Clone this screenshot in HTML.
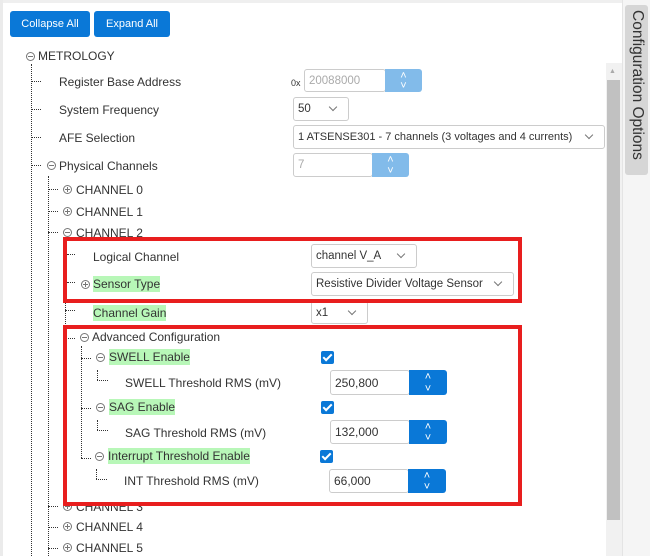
<!DOCTYPE html>
<html><head><meta charset="utf-8"><style>
*{box-sizing:border-box;margin:0;padding:0}
body{width:650px;height:556px;overflow:hidden;background:#fff;font-family:"Liberation Sans",sans-serif;font-size:12px;color:#333;position:relative}
.a{position:absolute}
.t{position:absolute;line-height:16px;white-space:nowrap}
.g{background:#b8f7b8}
.btn{position:absolute;background:#0a78d7;color:#fff;border-radius:3px;font-size:11px;text-align:center;line-height:26px;height:26px;top:11px}
.vl{position:absolute;border-left:1px dotted #333;width:0}
.hl{position:absolute;border-top:1px dotted #333;height:0;width:10px}
.ic{position:absolute;width:9px;height:9px;border:1px solid #777;border-radius:50%}
.ic:before{content:"";position:absolute;left:1px;top:3px;width:5px;height:1px;background:#777}
.ic.p:after{content:"";position:absolute;left:3px;top:1px;width:1px;height:5px;background:#777}
.in{position:absolute;border:1px solid #ccc;border-radius:3px;background:#fff;padding-left:4px;padding-right:24px;font-size:11.5px;display:flex;align-items:center;white-space:nowrap;overflow:hidden}
.sel:after{content:"";position:absolute;right:12px;top:50%;margin-top:-5px;width:5px;height:5px;border-right:1px solid #777;border-bottom:1px solid #777;transform:rotate(45deg)}
.sp{position:absolute;border-radius:0 3px 3px 0;color:#fff;font-size:9px;text-align:center}
.sp:before{content:"˄";position:absolute;left:0;right:0;top:1px;font-size:11px}
.sp:after{content:"˅";position:absolute;left:0;right:0;bottom:0;font-size:11px}
.cb{position:absolute;width:13px;height:13px;background:#0a78d7;border-radius:2px}
.cb:after{content:"";position:absolute;left:4px;top:1px;width:3px;height:7px;border-right:2px solid #fff;border-bottom:2px solid #fff;transform:rotate(45deg)}
.red{position:absolute;border:4px solid #e81e1e}
</style></head><body>
<div class="a" style="left:0;top:0;width:650px;height:3px;background:#efefef"></div>
<div class="a" style="left:0;top:0;width:3px;height:556px;background:#ebebeb"></div>
<div class="a" style="left:622px;top:0;width:28px;height:556px;background:#f5f5f5;border-left:1px solid #e4e4e4"></div>
<div class="a" style="left:625px;top:5px;width:23px;height:170px;background:#d6d6d6;border-radius:3px"></div>
<div class="t" style="left:628px;top:10px;writing-mode:vertical-rl;font-size:15.5px;color:#333;line-height:18px">Configuration Options</div>
<div class="a" style="left:606px;top:63px;width:16px;height:493px;background:#f1f1f1"></div>
<div class="a" style="left:607px;top:80px;width:13px;height:440px;background:#c1c1c1"></div>
<div class="t" style="left:609px;top:64px;font-size:7px;color:#aaa">▲</div>

<div class="btn" style="left:10px;width:80px">Collapse All</div>
<div class="btn" style="left:94px;width:76px">Expand All</div>

<div class="vl" style="left:31px;top:64px;height:492px"></div>
<div class="ic" style="left:26px;top:52px"></div>
<div class="t" style="left:38px;top:48px">METROLOGY</div>

<div class="hl" style="left:31px;top:81px"></div><div class="t" style="left:59px;top:74px">Register Base Address</div>
<div class="t" style="left:291px;top:75px;font-size:9px">0x</div>
<div class="in" style="left:304px;top:69px;width:82px;height:23px;color:#aaa">20088000</div>
<div class="sp" style="left:385px;top:69px;width:37px;height:23px;background:#82bbea"></div>

<div class="hl" style="left:31px;top:109px"></div><div class="t" style="left:59px;top:102px">System Frequency</div>
<div class="in sel" style="left:293px;top:97px;width:56px;height:24px">50</div>

<div class="hl" style="left:31px;top:137px"></div><div class="t" style="left:59px;top:130px">AFE Selection</div>
<div class="in sel" style="left:293px;top:125px;width:312px;height:24px;font-size:11px">1 ATSENSE301 - 7 channels (3 voltages and 4 currents)</div>

<div class="hl" style="left:31px;top:165px"></div><div class="ic" style="left:47px;top:161px"></div><div class="t" style="left:59px;top:158px">Physical Channels</div>
<div class="in" style="left:293px;top:153px;width:80px;height:24px;color:#aaa">7</div>
<div class="sp" style="left:372px;top:153px;width:37px;height:24px;background:#82bbea"></div>

<div class="vl" style="left:48px;top:176px;height:380px"></div>
<div class="hl" style="left:48px;top:189px"></div><div class="ic p" style="left:63px;top:185px"></div><div class="t" style="left:76px;top:182px">CHANNEL 0</div>
<div class="hl" style="left:48px;top:211px"></div><div class="ic p" style="left:63px;top:207px"></div><div class="t" style="left:76px;top:204px">CHANNEL 1</div>
<div class="hl" style="left:48px;top:232px"></div><div class="ic" style="left:63px;top:228px"></div><div class="t" style="left:76px;top:225px">CHANNEL 2</div>
<div class="vl" style="left:65px;top:240px;height:90px"></div>

<div class="hl" style="left:67px;top:254px;width:8px"></div><div class="t" style="left:93px;top:249px">Logical Channel</div>
<div class="in sel" style="left:311px;top:244px;width:106px;height:24px">channel V_A</div>
<div class="hl" style="left:67px;top:282px;width:8px"></div><div class="ic p" style="left:81px;top:280px"></div><div class="t g" style="left:93px;top:276px">Sensor Type</div>
<div class="in sel" style="left:311px;top:272px;width:203px;height:24px">Resistive Divider Voltage Sensor</div>
<div class="hl" style="left:65px;top:310px"></div><div class="t g" style="left:93px;top:305px">Channel Gain</div>
<div class="in sel" style="left:311px;top:301px;width:57px;height:23px">x1</div>

<div class="hl" style="left:65px;top:338px"></div><div class="ic" style="left:80px;top:333px"></div><div class="t" style="left:92px;top:329px">Advanced Configuration</div>
<div class="vl" style="left:81px;top:346px;height:112px"></div>
<div class="hl" style="left:81px;top:358px"></div><div class="ic" style="left:96px;top:353px"></div><div class="t g" style="left:109px;top:349px">SWELL Enable</div>
<div class="cb" style="left:321px;top:351px"></div>
<div class="vl" style="left:97px;top:370px;height:10px"></div><div class="hl" style="left:97px;top:380px;width:11px"></div>
<div class="t" style="left:125px;top:375px">SWELL Threshold RMS (mV)</div>
<div class="in" style="left:330px;top:370px;width:80px;height:25px;font-size:12px">250,800</div>
<div class="sp" style="left:409px;top:370px;width:38px;height:25px;background:#0a78d7"></div>

<div class="hl" style="left:81px;top:408px"></div><div class="ic" style="left:96px;top:403px"></div><div class="t g" style="left:109px;top:399px">SAG Enable</div>
<div class="cb" style="left:321px;top:401px"></div>
<div class="vl" style="left:97px;top:420px;height:10px"></div><div class="hl" style="left:97px;top:430px;width:11px"></div>
<div class="t" style="left:125px;top:425px">SAG Threshold RMS (mV)</div>
<div class="in" style="left:330px;top:420px;width:80px;height:24px;font-size:12px">132,000</div>
<div class="sp" style="left:409px;top:420px;width:38px;height:24px;background:#0a78d7"></div>

<div class="hl" style="left:81px;top:458px"></div><div class="ic" style="left:95px;top:452px"></div><div class="t g" style="left:108px;top:448px">Interrupt Threshold Enable</div>
<div class="cb" style="left:320px;top:450px"></div>
<div class="vl" style="left:96px;top:469px;height:10px"></div><div class="hl" style="left:96px;top:479px;width:11px"></div>
<div class="t" style="left:124px;top:473px">INT Threshold RMS (mV)</div>
<div class="in" style="left:329px;top:469px;width:80px;height:24px;font-size:12px">66,000</div>
<div class="sp" style="left:408px;top:469px;width:38px;height:24px;background:#0a78d7"></div>

<div class="hl" style="left:48px;top:506px"></div><div class="ic p" style="left:63px;top:502px"></div><div class="t" style="left:76px;top:499px">CHANNEL 3</div>
<div class="hl" style="left:48px;top:527px"></div><div class="ic p" style="left:63px;top:522px"></div><div class="t" style="left:76px;top:519px">CHANNEL 4</div>
<div class="hl" style="left:48px;top:548px"></div><div class="ic p" style="left:63px;top:543px"></div><div class="t" style="left:76px;top:540px">CHANNEL 5</div>

<div class="red" style="left:63px;top:237px;width:459px;height:66px"></div>
<div class="red" style="left:63px;top:325px;width:459px;height:181px"></div>
</body></html>
